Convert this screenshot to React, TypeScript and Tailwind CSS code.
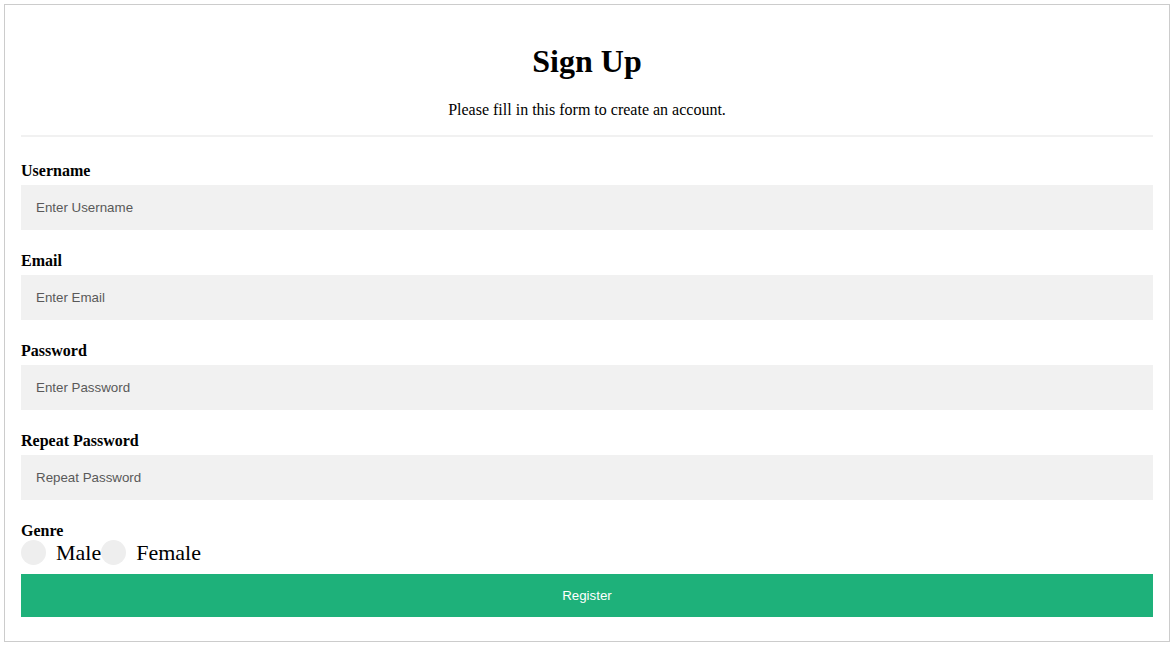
import React from 'react';

const fields = [
  { label: 'Username', placeholder: 'Enter Username', type: 'text' },
  { label: 'Email', placeholder: 'Enter Email', type: 'text' },
  { label: 'Password', placeholder: 'Enter Password', type: 'password' },
  { label: 'Repeat Password', placeholder: 'Repeat Password', type: 'password' },
];

export default function App() {
  return (
    <div className="p-1 bg-white font-['Liberation_Serif',serif] text-black">
      <div className="border border-[#ccc] p-4">
        <h1 className="mt-[22px] text-center text-[32px] font-bold leading-[37px]">Sign Up</h1>
        <p className="mt-[21px] text-center text-base leading-[18px]">Please fill in this form to create an account.</p>
        <hr className="mt-4 mb-[25px] border-0 border-t-2 border-[#f1f1f1]" />

        {fields.map((f) => (
          <div key={f.label}>
            <label className="block text-base font-bold leading-[18px]">{f.label}</label>
            <input
              type={f.type}
              placeholder={f.placeholder}
              className="mt-[5px] mb-[22px] block h-[45px] w-full bg-[#f1f1f1] px-[15px] font-['Liberation_Sans',Arial,sans-serif] text-[13.33px] outline-none placeholder:text-[#595959]"
            />
          </div>
        ))}

        <label className="block text-base font-bold leading-[18px]">Genre</label>
        <div className="flex h-[25px] items-center">
          <label className="flex items-center">
            <span className="h-[25px] w-[25px] rounded-full bg-[#eee]" />
            <span className="ml-[10px] text-[22px] leading-[25px]">Male</span>
          </label>
          <label className="flex items-center">
            <span className="h-[25px] w-[25px] rounded-full bg-[#eee]" />
            <span className="ml-[10px] text-[22px] leading-[25px]">Female</span>
          </label>
        </div>

        <button className="mt-[9px] mb-2 block h-[43px] w-full bg-[#1eb17a] font-['Liberation_Sans',Arial,sans-serif] text-[13.33px] text-white">
          Register
        </button>
      </div>
    </div>
  );
}
